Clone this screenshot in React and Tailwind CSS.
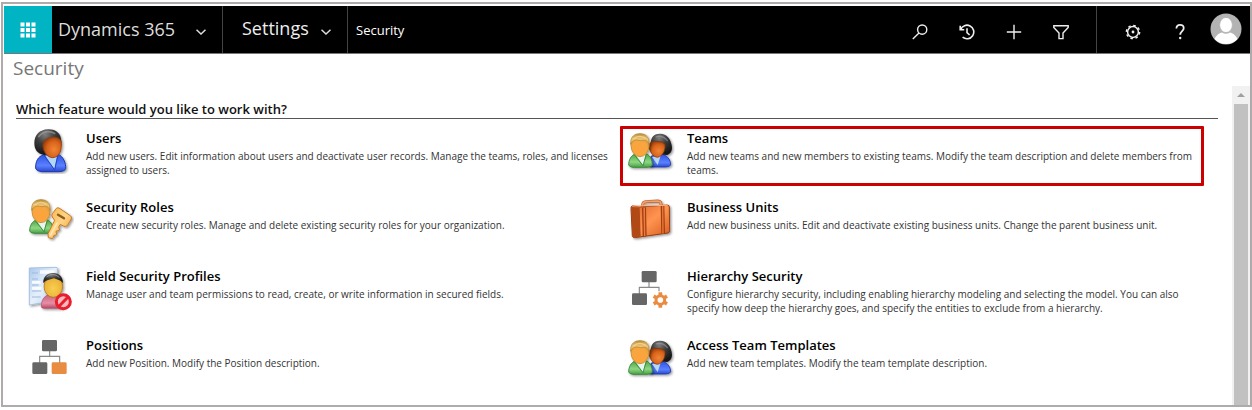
import React from "react";

function Defs() {
  return (
    <svg className="absolute h-0 w-0" aria-hidden="true">
      <defs>
        <radialGradient id="gold" cx="0.45" cy="0.75" r="0.75">
          <stop offset="0" stopColor="#ffa23a" />
          <stop offset="0.6" stopColor="#f6a640" />
          <stop offset="1" stopColor="#d3983a" />
        </radialGradient>
        <linearGradient id="blond" x1="0" y1="0" x2="0" y2="1">
          <stop offset="0" stopColor="#b98f3e" />
          <stop offset="0.5" stopColor="#eec473" />
          <stop offset="1" stopColor="#dfa850" />
        </linearGradient>
        <radialGradient id="brown" cx="0.6" cy="0.6" r="0.65">
          <stop offset="0" stopColor="#f08634" />
          <stop offset="0.6" stopColor="#d8621a" />
          <stop offset="1" stopColor="#933a0a" />
        </radialGradient>
        <radialGradient id="yellow" cx="0.5" cy="0.6" r="0.65">
          <stop offset="0" stopColor="#f8cf52" />
          <stop offset="0.7" stopColor="#ecb438" />
          <stop offset="1" stopColor="#b88122" />
        </radialGradient>
        <radialGradient id="dark" cx="0.4" cy="0.2" r="0.8">
          <stop offset="0" stopColor="#808080" />
          <stop offset="0.45" stopColor="#3c3c3c" />
          <stop offset="1" stopColor="#141414" />
        </radialGradient>
        <linearGradient id="blue" x1="0" y1="0" x2="0" y2="1">
          <stop offset="0" stopColor="#2f52e0" />
          <stop offset="0.65" stopColor="#5a80ff" />
          <stop offset="1" stopColor="#2a48cc" />
        </linearGradient>
        <linearGradient id="green" x1="0" y1="0" x2="0" y2="1">
          <stop offset="0" stopColor="#4da548" />
          <stop offset="0.6" stopColor="#8fd683" />
          <stop offset="1" stopColor="#45a046" />
        </linearGradient>
        <linearGradient id="pink" x1="0" y1="0" x2="0" y2="1">
          <stop offset="0" stopColor="#c8617e" />
          <stop offset="0.6" stopColor="#e78fa5" />
          <stop offset="1" stopColor="#b84868" />
        </linearGradient>
        <linearGradient id="key" x1="0" y1="0" x2="1" y2="1">
          <stop offset="0" stopColor="#f7b24a" />
          <stop offset="0.5" stopColor="#ffd486" />
          <stop offset="1" stopColor="#e8922a" />
        </linearGradient>
        <linearGradient id="sheet" x1="0" y1="0" x2="1" y2="1">
          <stop offset="0" stopColor="#a9c8ec" />
          <stop offset="0.5" stopColor="#e6f0fb" />
          <stop offset="1" stopColor="#b3cdec" />
        </linearGradient>
        <linearGradient id="leather" x1="0" y1="0" x2="1" y2="1">
          <stop offset="0" stopColor="#d9632a" />
          <stop offset="0.5" stopColor="#ff9450" />
          <stop offset="1" stopColor="#d65a1e" />
        </linearGradient>
        <filter id="shade" x="-20%" y="-20%" width="150%" height="150%">
          <feDropShadow dx="4" dy="4" stdDeviation="3" floodColor="#000" floodOpacity="0.4" />
        </filter>
      </defs>
    </svg>
  );
}

function FeatureIcon({ viewBox, children }) {
  return (
    <svg viewBox={viewBox} className="h-12 w-12 shrink-0" aria-hidden="true">
      {children}
    </svg>
  );
}

function BlondMan() {
  return (
    <g filter="url(#shade)">
      <path d="M41 138 C41 122 48 110 60 105 L95 105 C106 110 112 124 112 138 Q110 144 98 145 L54 145 Q43 144 41 138Z" fill="url(#green)" stroke="#2e7f30" strokeWidth="2.5" />
      <path d="M60 105 L92 105 L84 138 Z" fill="#e9f5f0" />
      <path d="M57 106 L84 140 L94 106" fill="none" stroke="#2f8434" strokeWidth="2.5" />
      <ellipse cx="75" cy="79" rx="27" ry="34" fill="url(#gold)" stroke="#c38a2c" strokeWidth="2.5" />
      <path d="M47 76 C45 52 60 43 76 44 C94 44 104 56 102 76 C98 66 92 62 84 64 C74 68 67 60 59 64 C53 67 49 71 47 76Z" fill="url(#blond)" stroke="#b08334" strokeWidth="2" />
      <path d="M56 60 Q72 45 92 58" fill="none" stroke="#f7e0a4" strokeWidth="4" opacity="0.7" />
    </g>
  );
}

function DarkHairWoman() {
  return (
    <g filter="url(#shade)">
      <path d="M108 112 Q118 105 140 106 C156 108 167 122 167 138 Q163 144 152 144 L104 144Z" fill="url(#blue)" stroke="#1c36ae" strokeWidth="2.5" />
      <path d="M111 114 L137 110 L128 138 Z" fill="#b9d7f7" />
      <path d="M107 72 C108 52 120 43 136 44 C155 44 167 60 170 78 C173 94 168 104 156 108 L130 106Z" fill="url(#dark)" />
      <path d="M102 80 C104 70 112 65 122 67 C132 69 141 66 150 76 C152 96 142 113 127 115 C112 113 103 96 102 80Z" fill="url(#brown)" stroke="#7c3208" strokeWidth="2" />
      <path d="M122 54 Q142 46 158 66" fill="none" stroke="#aaa" strokeWidth="4" opacity="0.5" />
    </g>
  );
}

function PairIcon() {
  return (
    <FeatureIcon viewBox="36 21 144 144">
      <DarkHairWoman />
      <BlondMan />
    </FeatureIcon>
  );
}

function UserIcon() {
  return (
    <FeatureIcon viewBox="18 21 144 144">
      <g filter="url(#shade)">
        <path d="M47 148 C46 128 54 112 70 108 L114 106 C130 112 138 132 137 149 Q134 157 118 158 L64 158 Q49 156 47 148Z" fill="url(#blue)" stroke="#1c36ae" strokeWidth="3" />
        <path d="M76 110 L112 106 L103 150 Z" fill="#b4d7f5" />
        <path d="M72 109 L104 153 L114 108" fill="none" stroke="#2244c4" strokeWidth="3" />
        <path d="M84 31 C108 30 123 44 124 66 C124 88 120 98 108 102 L72 108 C52 104 43 92 43 72 C43 48 58 32 84 31Z" fill="url(#dark)" />
        <path d="M69 76 C71 62 84 55 104 54 Q117 56 123 64 C127 90 120 115 98 116 C78 115 68 94 69 76Z" fill="url(#brown)" stroke="#8c3c0c" strokeWidth="2.5" />
        <path d="M55 54 Q76 28 106 44" fill="none" stroke="#b5b5b5" strokeWidth="5" opacity="0.5" />
      </g>
    </FeatureIcon>
  );
}

function RoleIcon() {
  return (
    <FeatureIcon viewBox="18 226 144 144">
      <g transform="translate(-12 196)">
        <BlondMan />
      </g>
      <g filter="url(#shade)">
        <path d="M109 266 Q113 263 117 265 L151 288 Q157 292 154 298 L142 318 Q137 323 130 319 L121 314 L116 322 L119 331 L108 335 L110 345 L101 348 L98 357 L85 354 L84 342 L104 302 L97 292 Q94 287 97 282 Z" fill="url(#key)" stroke="#c47a26" strokeWidth="3" strokeLinejoin="round" />
        <path d="M114 285 L132 296" stroke="#8b5d1d" strokeWidth="7" strokeLinecap="round" />
        <path d="M112 309 L91 347" stroke="#fff0c8" strokeWidth="4" opacity="0.8" />
      </g>
    </FeatureIcon>
  );
}

function ProfileIcon() {
  return (
    <FeatureIcon viewBox="18 27 144 144">
      <g filter="url(#shade)">
        <path d="M28 39 L108 37 Q112 37 112 41 L112 136 L28 150Z" fill="url(#sheet)" stroke="#9dbbdd" strokeWidth="2.5" />
        <path d="M36 54 H54 M36 72 H54 M36 90 H56 M36 108 H64 M36 126 H62" stroke="#9db9dd" strokeWidth="3" />
        <path d="M60 46 H102 V56 H60Z M36 78 H62 V86 H36Z M36 96 H64 V104 H36Z" fill="#fff" opacity="0.85" />
      </g>
      <g filter="url(#shade)">
        <path d="M64 155 C64 136 72 124 84 120 H110 C124 124 130 140 128 160 H74 Q64 160 64 155Z" fill="url(#pink)" stroke="#ad4965" strokeWidth="2" />
        <ellipse cx="100" cy="94" rx="28" ry="33" fill="url(#yellow)" stroke="#9d6b12" strokeWidth="2" />
        <path d="M70 84 C68 66 82 54 98 54 C117 53 129 66 129 84 Q122 75 114 74 L102 70 L84 75 Q76 77 70 84Z" fill="url(#dark)" />
        <path d="M80 66 Q98 50 118 67" fill="none" stroke="#aaa" strokeWidth="3" opacity="0.7" />
      </g>
      <circle cx="130" cy="140" r="21" fill="#f6b9bd" stroke="#e81d2d" strokeWidth="9" />
      <path d="M117 154 L144 126" stroke="#e81d2d" strokeWidth="9" />
    </FeatureIcon>
  );
}

function BriefcaseIcon() {
  return (
    <FeatureIcon viewBox="36 226 144 144">
      <g filter="url(#shade)">
        <path d="M83 264 V255 Q84 247 92 246 L127 244 Q137 244 138 252 V260" fill="none" stroke="#b8602f" strokeWidth="9" />
        <path d="M83 262 V255 Q84 247 92 246 L127 244 Q137 244 138 252 V258" fill="none" stroke="#f3a06a" strokeWidth="5" />
        <path d="M52 258 Q47 260 48 267 L52 348 Q53 354 59 354 L159 340 Q164 339 164 333 L163 262 Q163 256 157 256 L72 262Z" fill="url(#leather)" stroke="#963c12" strokeWidth="3" strokeLinejoin="round" />
        <path d="M49 262 L74 264 L77 352 L58 354 Q53 354 52 348Z" fill="#b04818" />
        <path d="M81 264 L93 263 L95 349 L83 351Z M137 259 L148 258 L150 341 L139 343Z" fill="#a03d13" />
        <path d="M85 265 L90 264 L91 349 L87 350Z M141 260 L145 259 L146 341 L142 342Z" fill="#ec7c3a" />
        <path d="M51 259 L158 257" stroke="#ffb17c" strokeWidth="3" />
      </g>
    </FeatureIcon>
  );
}

function HierarchyIcon() {
  return (
    <FeatureIcon viewBox="36 27 144 144">
      <path d="M102 80 V97 M73 118 V97 H132 V109" fill="none" stroke="#8a8a8a" strokeWidth="3.5" />
      <rect x="80" y="48" width="45" height="34" rx="4" fill="#666" />
      <rect x="51" y="115" width="45" height="35" rx="4" fill="#666" />
      <circle cx="136" cy="135" r="13" fill="none" stroke="#e98c42" strokeWidth="9" />
      <path d="M136 112 V120 M136 150 V158 M116 123.5 L123 127.5 M149 142.5 L156 146.5 M116 146.5 L123 142.5 M149 127.5 L156 123.5" stroke="#e98c42" strokeWidth="11" />
    </FeatureIcon>
  );
}

function PositionIcon() {
  return (
    <FeatureIcon viewBox="18 232 144 144">
      <path d="M89 284 V302 M59 322 V302 H119 V322" fill="none" stroke="#8a8a8a" strokeWidth="3.5" />
      <rect x="66" y="253" width="45" height="34" rx="4" fill="#666" />
      <rect x="37" y="320" width="45" height="35" rx="4" fill="#666" />
      <rect x="95" y="320" width="45" height="35" rx="4" fill="#e88c42" />
    </FeatureIcon>
  );
}

const features = [
  { title: "Users", text: "Add new users. Edit information about users and deactivate user records. Manage the teams, roles, and licenses assigned to users.", Icon: UserIcon },
  { title: "Teams", text: "Add new teams and new members to existing teams. Modify the team description and delete members from teams.", Icon: PairIcon, marked: true },
  { title: "Security Roles", text: "Create new security roles. Manage and delete existing security roles for your organization.", Icon: RoleIcon },
  { title: "Business Units", text: "Add new business units. Edit and deactivate existing business units. Change the parent business unit.", Icon: BriefcaseIcon },
  { title: "Field Security Profiles", text: "Manage user and team permissions to read, create, or write information in secured fields.", Icon: ProfileIcon },
  { title: "Hierarchy Security", text: "Configure hierarchy security, including enabling hierarchy modeling and selecting the model. You can also specify how deep the hierarchy goes, and specify the entities to exclude from a hierarchy.", Icon: HierarchyIcon },
  { title: "Positions", text: "Add new Position. Modify the Position description.", Icon: PositionIcon },
  { title: "Access Team Templates", text: "Add new team templates. Modify the team template description.", Icon: PairIcon },
];

function Feature({ title, text, Icon, marked }) {
  return (
    <li className="relative min-h-[57px]">
      <a href="#" className="flex gap-3 pr-[7px] pl-2.5">
        <Icon />
        <span className="block pt-[3px]">
          <span className="block text-[13px] leading-[19px] font-semibold text-black">{title}</span>
          <span className="block pt-px text-[10px] leading-[14px] text-[#333]">{text}</span>
        </span>
      </a>
      {marked && <span className="pointer-events-none absolute top-0 right-[14px] -bottom-[3px] left-[3px] rounded-[1px] border-3 border-[#cc0000]" />}
    </li>
  );
}

function Chevron() {
  return (
    <svg viewBox="0 0 10 6" className="h-1.5 w-2.5" fill="none" stroke="#ddd" strokeWidth="1.5" aria-hidden="true">
      <path d="M0.5 0.8 L5 5 L9.5 0.8" />
    </svg>
  );
}

function ToolButton({ label, children }) {
  return (
    <button type="button" aria-label={label} className="flex h-full w-[47px] items-center justify-center pt-1">
      <svg viewBox="0 0 16 16" className="h-4 w-4" fill="none" stroke="#eee" strokeWidth="1.4" aria-hidden="true">
        {children}
      </svg>
    </button>
  );
}

function Header() {
  return (
    <header className="flex h-12 border-b border-[#777] bg-black text-[#ddd]">
      <button type="button" aria-label="Apps" className="flex w-12 items-center justify-center bg-[#00b4c4]">
        <svg viewBox="0 0 16 16" className="h-4 w-4" fill="#fff" aria-hidden="true">
          <path d="M0.5 0.5h4v4h-4z M6 0.5h4v4H6z M11.5 0.5h4v4h-4z M0.5 6h4v4h-4z M6 6h4v4H6z M11.5 6h4v4h-4z M0.5 11.5h4v4h-4z M6 11.5h4v4H6z M11.5 11.5h4v4h-4z" />
        </svg>
      </button>
      <button type="button" className="flex w-[171px] items-center justify-between border-r border-[#444] pr-4 pl-1.5 text-[18px] leading-6">
        <span className="pb-0.5">Dynamics 365</span>
        <span className="pt-1"><Chevron /></span>
      </button>
      <button type="button" className="flex w-[125px] items-center justify-between border-r border-[#444] pr-4 pl-[19px] text-[18px] leading-6 text-[#eee]">
        <span className="pb-1">Settings</span>
        <span className="pt-1"><Chevron /></span>
      </button>
      <a href="#" className="flex items-center pt-0.5 pl-2 text-[13px] text-white">Security</a>
      <div className="ml-auto flex items-center">
        <ToolButton label="Search">
          <circle cx="10.2" cy="5.6" r="4.6" />
          <path d="M7 9 L0.8 15" />
        </ToolButton>
        <ToolButton label="Recent">
          <path d="M1.2 1.8 V5.8 H5.2 M1.6 5.6 A6.8 6.8 0 1 1 3.6 13.2 M8 4.2 V8.6 L10.6 11" strokeWidth="1.6" />
        </ToolButton>
        <ToolButton label="Create">
          <path d="M8 0.8 V15.2 M0.8 8 H15.2" />
        </ToolButton>
        <ToolButton label="Advanced find">
          <path d="M0.8 1.8 H15.2 V3.4 L10 9 V14.6 H6 V9 L0.8 3.4Z" />
        </ToolButton>
        <div className="ml-3 h-full border-l border-[#444] pl-3">
          <ToolButton label="Options">
            <circle cx="8" cy="8" r="5.4" strokeWidth="1.5" />
            <circle cx="8" cy="8" r="6.6" strokeWidth="1.5" strokeDasharray="2.59 2.59" />
            <circle cx="8" cy="8" r="1.4" fill="#eee" stroke="none" />
          </ToolButton>
        </div>
        <ToolButton label="Help">
          <path d="M4.4 4.4 C4.4 2 6 0.9 8 0.9 C10.2 0.9 11.7 2.2 11.7 4.2 C11.7 7 8.2 7.2 8.2 10.8" strokeWidth="1.8" />
          <circle cx="8.2" cy="14" r="1.2" fill="#eee" stroke="none" />
        </ToolButton>
        <button type="button" aria-label="Account" className="mr-2 ml-[7px] pb-px">
          <svg viewBox="0 0 32 32" className="h-8 w-8" aria-hidden="true">
            <circle cx="16" cy="16" r="15.5" fill="#b3b3b3" />
            <path d="M4.5 26 C7 21 10 20 12 19.5 Q16 22 20 19.5 C22 20 25 21 27.5 26 A15.5 15.5 0 0 1 4.5 26Z" fill="#fff" />
            <ellipse cx="16" cy="12" rx="6.4" ry="7.6" fill="#fff" stroke="#b3b3b3" strokeWidth="0.8" />
          </svg>
        </button>
      </div>
    </header>
  );
}

export default function App() {
  return (
    <div className="flex min-h-screen bg-white pt-0.5 pb-[3px] pl-px font-['Open_Sans','Noto_Sans',sans-serif]">
      <Defs />
      <div className="flex flex-1 flex-col border-2 border-[#b0abab] pt-0.5 pl-px">
        <Header />
        <main className="flex flex-1 flex-col">
          <h1 className="h-8 pl-[9px] text-[19px] leading-7 text-[#777]">Security</h1>
          <div className="flex flex-1">
            <section className="flex-1 pr-3.5 pl-3">
              <h2 className="border-b border-[#555] pt-3.5 text-[13px] leading-[18px] font-semibold text-[#111]">Which feature would you like to work with?</h2>
              <ul className="grid grid-cols-2 gap-y-3 pt-[7px]">
                {features.map((f) => (
                  <Feature key={f.title} {...f} />
                ))}
              </ul>
            </section>
            <div className="flex w-[18px] flex-col items-center bg-[#f1f1f1]" aria-hidden="true">
              <div className="flex h-[18px] items-center">
                <svg viewBox="0 0 8 4" className="h-1 w-2" fill="#a0a0a0"><path d="M0 4 L4 0 L8 4Z" /></svg>
              </div>
              <div className="w-3.5 flex-1 bg-[#c1c1c1]" />
            </div>
          </div>
        </main>
      </div>
    </div>
  );
}
